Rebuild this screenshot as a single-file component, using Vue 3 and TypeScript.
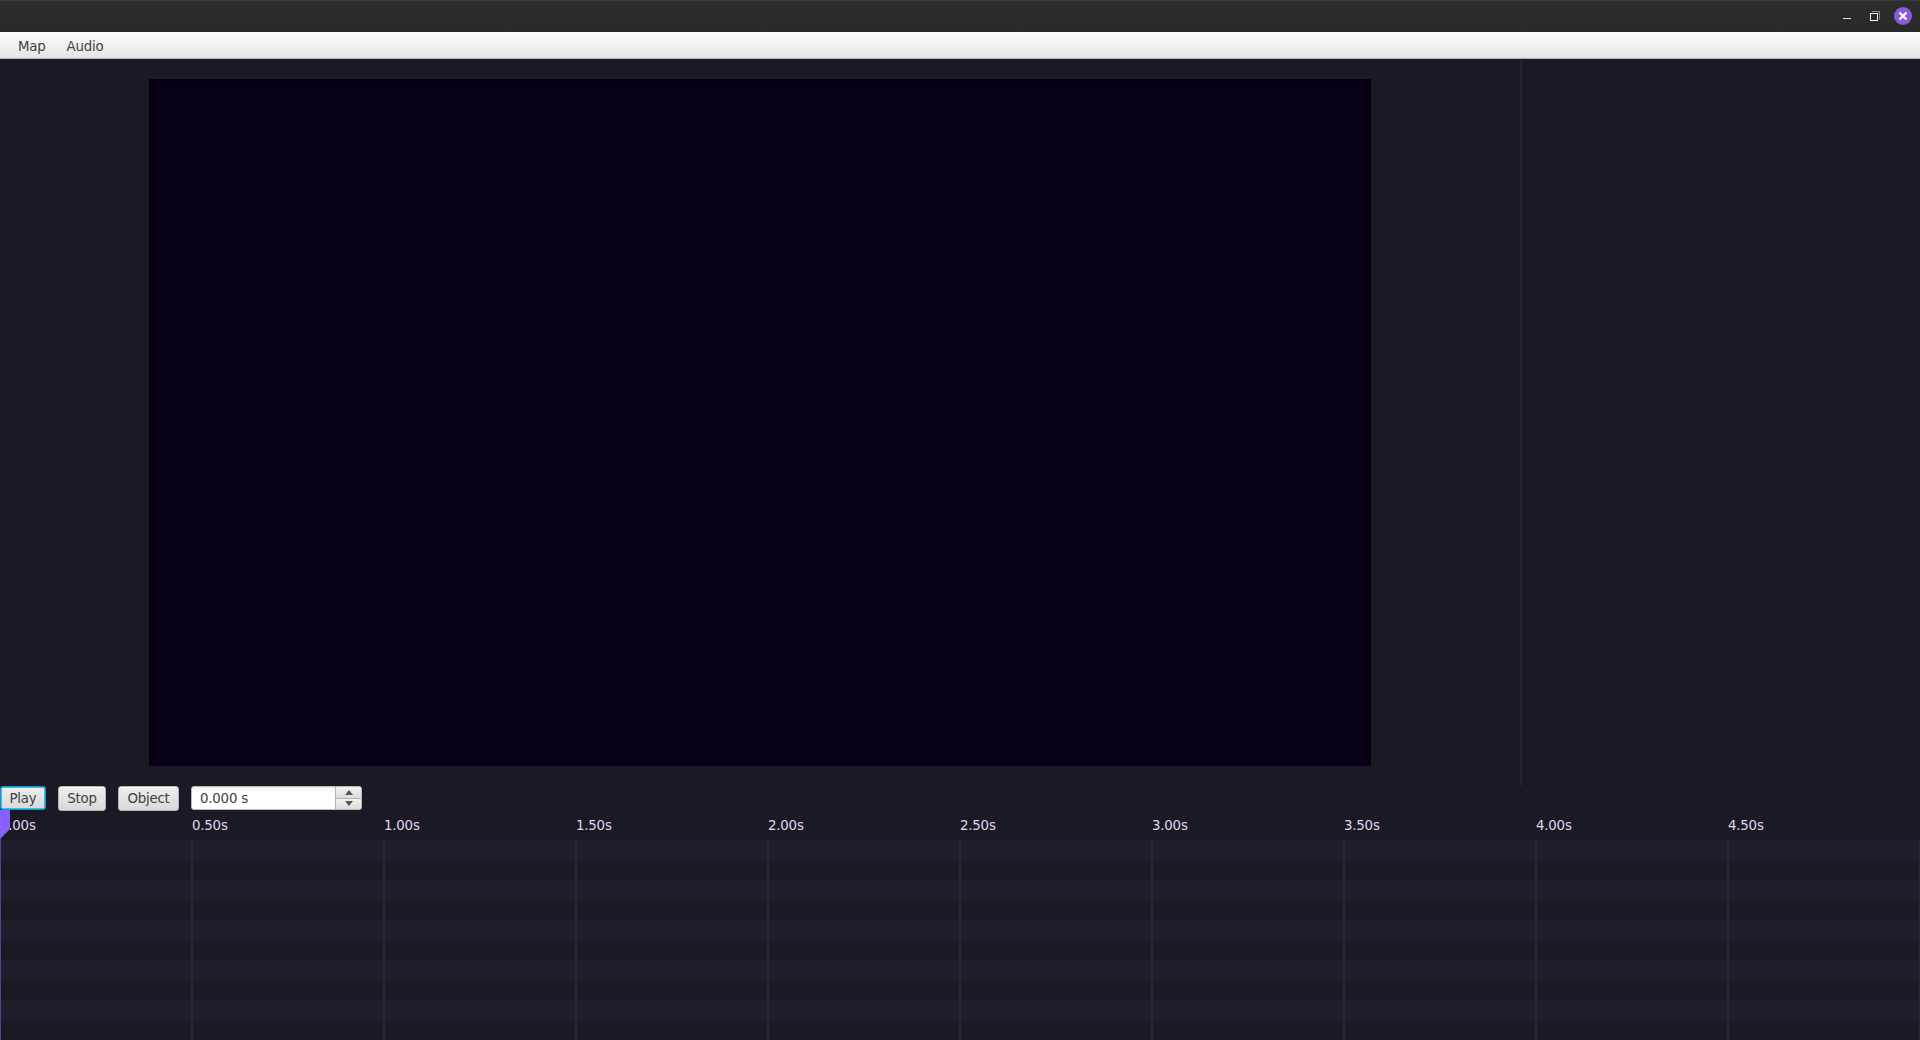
<script setup lang="ts">
const menus: string[] = ['Map', 'Audio']
const actions: string[] = ['Play', 'Stop', 'Object']
const ticks: string[] = Array.from({ length: 10 }, (_, i) => (i * 0.5).toFixed(2) + 's')
const rows: number = 10
</script>

<template>
  <div class="window">
    <header class="titlebar">
      <svg class="controls" width="80" height="32" viewBox="0 0 80 32">
        <path d="M3 18.500h8" stroke="#e4e4e4" fill="none" />
        <path d="M32 11.500h7.500v8" stroke="#8c8c8c" fill="none" />
        <rect x="30.500" y="13.500" width="7" height="7" stroke="#f2f2f2" fill="none" />
        <circle cx="63" cy="16" r="9" fill="#8b5bd9" />
        <path d="M59.500 12.500l7 7M66.500 12.500l-7 7" stroke="#fff" stroke-width="2.200" fill="none" />
      </svg>
    </header>
    <nav class="menubar">
      <span v-for="m in menus" :key="m" class="menu">{{ m }}</span>
    </nav>
    <main class="workspace">
      <section class="preview"><div class="canvas"></div></section>
      <aside class="inspector"></aside>
    </main>
    <section class="toolbar">
      <button v-for="a in actions" :key="a" class="btn" :class="a.toLowerCase()"><span>{{ a }}</span></button>
      <div class="spinner">
        <div class="value">0.000 s</div>
        <div class="arrows">
          <div class="arrow"><svg width="8" height="5" viewBox="0 0 8 5"><path d="M0 5L4 0l4 5z" fill="#555" /></svg></div>
          <div class="arrow"><svg width="8" height="5" viewBox="0 0 8 5"><path d="M0 0l4 5 4-5z" fill="#555" /></svg></div>
        </div>
      </div>
    </section>
    <section class="timeline">
      <div class="ruler">
        <span v-for="t in ticks" :key="t" class="tick">{{ t }}</span>
      </div>
      <div class="tracks">
        <div v-for="r in rows" :key="r" class="track"></div>
        <div class="grid"><i v-for="t in ticks" :key="t"></i></div>
      </div>
      <svg class="playhead" width="10" height="230" viewBox="0 0 10 230">
        <path d="M0 0h10v19L0 29z" fill="#8860ff" />
        <path d="M0.500 29v201" stroke="#56419b" />
      </svg>
    </section>
  </div>
</template>

<style>
body {
  margin: 0;
  background: #1a1a24;
  overflow: hidden;
}
</style>

<style scoped>
.window {
  width: 1920px;
  height: 1040px;
  display: flex;
  flex-direction: column;
  background: #1a1a24;
  font: 13.333px/16px "DejaVu Sans", sans-serif;
  letter-spacing: -0.2px;
  color: #404040;
  overflow: hidden;
}
.titlebar {
  height: 32px;
  box-sizing: border-box;
  border-top: 1px solid #3b3b3b;
  background: linear-gradient(#2d2d2d, #292929);
  display: flex;
  justify-content: flex-end;
}
.controls {
  margin-top: -1px;
}
.menubar {
  height: 27px;
  box-sizing: border-box;
  border-bottom: 1px solid #b0b0b0;
  background: linear-gradient(#fdfdfd, #e4e4e4);
  display: flex;
  gap: 21px;
  padding: 7px 0 0 18px;
}
.workspace {
  height: 727px;
  display: flex;
}
.preview {
  width: 1520px;
  display: flex;
  justify-content: center;
  align-items: center;
}
.canvas {
  width: 1222px;
  height: 687px;
  background: #090016;
}
.inspector {
  flex: 1;
  border-left: 2px solid #232132;
}
.toolbar {
  height: 24px;
  display: flex;
  gap: 12px;
}
.btn {
  height: 25px;
  box-sizing: border-box;
  border: 1px solid #b5b5b5;
  border-radius: 3px;
  padding: 0;
  background: linear-gradient(#eee, #d9d9d9);
  box-shadow: inset 0 1px #fafafa;
  font: inherit;
  letter-spacing: inherit;
  color: inherit;
}
.btn.play {
  width: 46px;
  height: 24px;
  padding-top: 2px;
  border: 1px solid #039ed3;
  box-shadow: inset 0 0 0 1px #4cb7dc;
}
.btn.stop {
  width: 48px;
}
.btn.object {
  width: 61px;
}
.spinner {
  width: 171px;
  height: 24px;
  box-sizing: border-box;
  border: 1px solid #b9b9b9;
  border-radius: 3px;
  display: flex;
  background: #fff;
  overflow: hidden;
}
.value {
  flex: 1;
  padding: 4px 0 0 8px;
  background: linear-gradient(#f0f0f0, #fff 5px);
}
.arrows {
  width: 25px;
  border-left: 1px solid #b5b5b5;
  display: flex;
  flex-direction: column;
}
.arrow {
  flex: 1;
  display: flex;
  align-items: center;
  justify-content: center;
  background: linear-gradient(#f1f1f1, #dcdcdc);
}
.arrow + .arrow {
  border-top: 1px solid #b5b5b5;
}
.timeline {
  position: relative;
  height: 230px;
}
.ruler {
  height: 30px;
  display: flex;
}
.tick {
  width: 192px;
  padding-top: 8px;
  box-sizing: border-box;
  color: #e9d1f8;
}
.tracks {
  position: relative;
}
.track {
  height: 20px;
}
.track:nth-child(odd) {
  background: #1e1e2c;
}
.grid {
  position: absolute;
  inset: -1px 0 0 -1px;
  display: flex;
}
.grid i {
  flex: none;
  box-sizing: border-box;
  width: 192px;
  border-right: 2px solid #272538;
  transform: translateX(2px);
}
.playhead {
  position: absolute;
  left: 0;
  top: 0;
}
</style>
